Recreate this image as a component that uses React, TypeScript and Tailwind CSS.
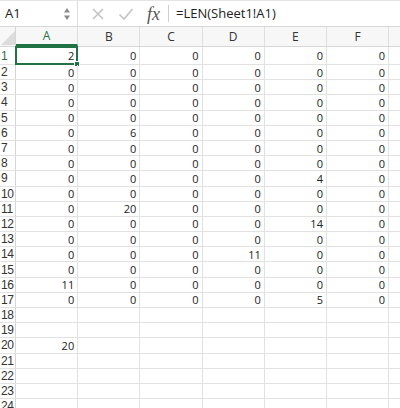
import React from 'react'

const cols = ['A', 'B', 'C', 'D', 'E', 'F', 'G']

// row values, columns A..F (null = empty)
const data: (number | null)[][] = [
  [2, 0, 0, 0, 0, 0],
  [0, 0, 0, 0, 0, 0],
  [0, 0, 0, 0, 0, 0],
  [0, 0, 0, 0, 0, 0],
  [0, 0, 0, 0, 0, 0],
  [0, 6, 0, 0, 0, 0],
  [0, 0, 0, 0, 0, 0],
  [0, 0, 0, 0, 0, 0],
  [0, 0, 0, 0, 4, 0],
  [0, 0, 0, 0, 0, 0],
  [0, 20, 0, 0, 0, 0],
  [0, 0, 0, 0, 14, 0],
  [0, 0, 0, 0, 0, 0],
  [0, 0, 0, 11, 0, 0],
  [0, 0, 0, 0, 0, 0],
  [11, 0, 0, 0, 0, 0],
  [0, 0, 0, 0, 5, 0],
  [],
  [],
  [20],
  [],
  [],
  [],
  [],
]

const FormulaBar: React.FC = () => (
  <div className="flex items-center h-[27px] bg-white border-t border-[#e4e4e4] border-b border-b-[#d6d6d6]">
    <div className="w-[78px] flex items-center pl-[5px] pr-[4px] h-full border-r border-[#dcdcdc]">
      <span className="text-[13px] text-[#222] flex-1">A1</span>
      <svg width="8" height="16" viewBox="0 0 8 16" className="mr-[2px]">
        <path d="M4 2 L7 6.5 L1 6.5 Z" fill="#8a8a8a" />
        <path d="M4 14 L7 9.5 L1 9.5 Z" fill="#8a8a8a" />
      </svg>
    </div>
    <div className="flex items-center h-full">
      <svg width="14" height="14" viewBox="0 0 14 14" className="ml-[13px]">
        <path d="M2 2 L12 12 M12 2 L2 12" stroke="#c4c4c4" strokeWidth="1.6" />
      </svg>
      <svg width="16" height="14" viewBox="0 0 16 14" className="ml-[13px]">
        <path d="M1.5 7.5 L6 12 L14.5 2" stroke="#c4c4c4" strokeWidth="1.6" fill="none" />
      </svg>
      <span
        className="ml-[13px] text-[18px] italic text-[#555] leading-none"
        style={{ fontFamily: '"Liberation Serif", serif' }}
      >
        fx
      </span>
      <div className="ml-[8px] w-px h-[17px] bg-[#d0d0d0]" />
      <span className="ml-[7px] text-[13px] text-[#222]">=LEN(Sheet1!A1)</span>
    </div>
  </div>
)

const HeaderRow: React.FC = () => (
  <div className="flex h-[20px] bg-[#f7f7f7] border-b border-[#d6d6d6]">
    <div className="w-[16px] shrink-0 border-r border-[#d6d6d6] relative overflow-hidden">
      <svg width="16" height="19" viewBox="0 0 16 19" className="absolute inset-0">
        <path d="M15 4 L15 18 L1 18 Z" fill="#dcdcdc" />
      </svg>
    </div>
    {cols.map((c) => (
      <div
        key={c}
        className={`w-[62.2px] shrink-0 flex items-center justify-center text-[12px] border-r border-[#dedede] ${
          c === 'A' ? 'text-[#217346] border-b-2 border-b-[#217346]' : 'text-[#333]'
        }`}
      >
        {c}
      </div>
    ))}
  </div>
)

export default function App() {
  return (
    <div
      className="w-[400px] h-[408px] overflow-hidden bg-white text-[#222]"
      style={{ fontFamily: '"Open Sans", "Liberation Sans", sans-serif' }}
    >
      <FormulaBar />
      <HeaderRow />
      {data.map((row, r) => (
        <div
          key={r}
          className={`flex leading-none border-b border-[#e2e2e2] ${r === 0 ? 'h-[18px]' : 'h-[15.2px]'}`}
        >
          <div
            className={`w-[16px] shrink-0 flex items-center pl-[1px] text-[12px] font-['Liberation_Sans',sans-serif] tracking-[-0.3px] border-r border-[#d6d6d6] ${
              r === 0 ? 'text-[#217346]' : 'text-[#333]'
            }`}
          >
            {r + 1}
          </div>
          {cols.map((c, ci) => {
            const v = row[ci]
            const selected = r === 0 && ci === 0
            return (
              <div
                key={c}
                className="w-[62.2px] shrink-0 relative flex items-center justify-end pr-[3px] text-[11px] border-r border-[#e2e2e2]"
              >
                {v !== undefined && v !== null ? v : ''}
                {selected && (
                  <div className="absolute -left-px -top-px -right-px -bottom-px border-2 border-[#217346]">
                    <div className="absolute -right-[4px] -bottom-[4px] w-[6px] h-[6px] bg-[#217346] border border-white" />
                  </div>
                )}
              </div>
            )
          })}
        </div>
      ))}
    </div>
  )
}
